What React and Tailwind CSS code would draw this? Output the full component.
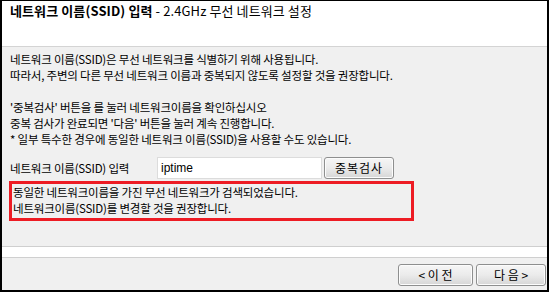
const font = { fontFamily: '"Noto Sans CJK KR", "Liberation Sans", sans-serif' };

const Btn = ({ label, className }) => (
    <button
        className={
            "h-[22px] rounded-[3px] border border-[#8e8f8f] bg-gradient-to-b from-[#f6f6f6] via-[#ebebeb] to-[#d6d6d6] text-[12px] leading-none text-black shadow-[inset_0_0_0_1px_#fcfcfc] " +
            className
        }
    >
        {label}
    </button>
);

const App = () => {
    return (
        <div
            className="flex h-[292px] w-[549px] flex-col border-x-2 border-t border-b-2 border-black bg-[#f0f0f0] text-black"
            style={font}
        >
            {/* title */}
            <div className="h-[46px] shrink-0 border-b border-[#d4d4d4] bg-white pl-[8px] pt-[2px] text-[13px] leading-[16px] tracking-[0.1px]">
                <span className="font-bold">네트워크 이름(SSID) 입력</span>
                <span> - 2.4GHz 무선 네트워크 설정</span>
            </div>

            {/* body */}
            <div className="flex-1 px-[8px] pt-[4px] text-[11.5px] leading-[16px] tracking-[-0.2px]">
                <p>네트워크 이름(SSID)은 무선 네트워크를 식별하기 위해 사용됩니다.</p>
                <p>따라서, 주변의 다른 무선 네트워크 이름과 중복되지 않도록 설정할 것을 권장합니다.</p>
                <p>&nbsp;</p>
                <p>'중복검사' 버튼을 를 눌러 네트워크이름을 확인하십시오</p>
                <p>중복 검사가 완료되면 '다음' 버튼을 눌러 계속 진행합니다.</p>
                <p>* 일부 특수한 경우에 동일한 네트워크 이름(SSID)을 사용할 수도 있습니다.</p>

                <div className="mt-[10px] flex h-[22px] items-center">
                    <span className="w-[147px]">네트워크 이름(SSID) 입력</span>
                    <input
                        className="h-[22px] w-[165px] border border-[#dcdcdc] bg-white px-[3px] text-[12px] tracking-normal outline-none"
                        style={{ fontFamily: '"Liberation Sans", sans-serif' }}
                        defaultValue="iptime"
                    />
                    <Btn label="중복검사" className="ml-[2px] w-[70px] tracking-[1px]" />
                </div>

                <div className="mt-[2px] h-[40px] w-[405px] -ml-[1px] border-[3px] border-[#ed1c24] pl-[1px] leading-[16px]">
                    <p>동일한 네트워크이름을 가진 무선 네트워크가 검색되었습니다.</p>
                    <p>네트워크이름(SSID)를 변경할 것을 권장합니다.</p>
                </div>
            </div>

            {/* footer */}
            <div className="h-[12px] shrink-0 border-y border-[#cfcfcf] bg-white" />
            <div className="flex h-[32px] shrink-0 items-center justify-end gap-[3px] pr-[1px] pt-[1px]">
                <Btn label="< 이 전" className="w-[75px]" />
                <Btn label="다 음 >" className="w-[70px]" />
            </div>
        </div>
    );
};

export default App;
